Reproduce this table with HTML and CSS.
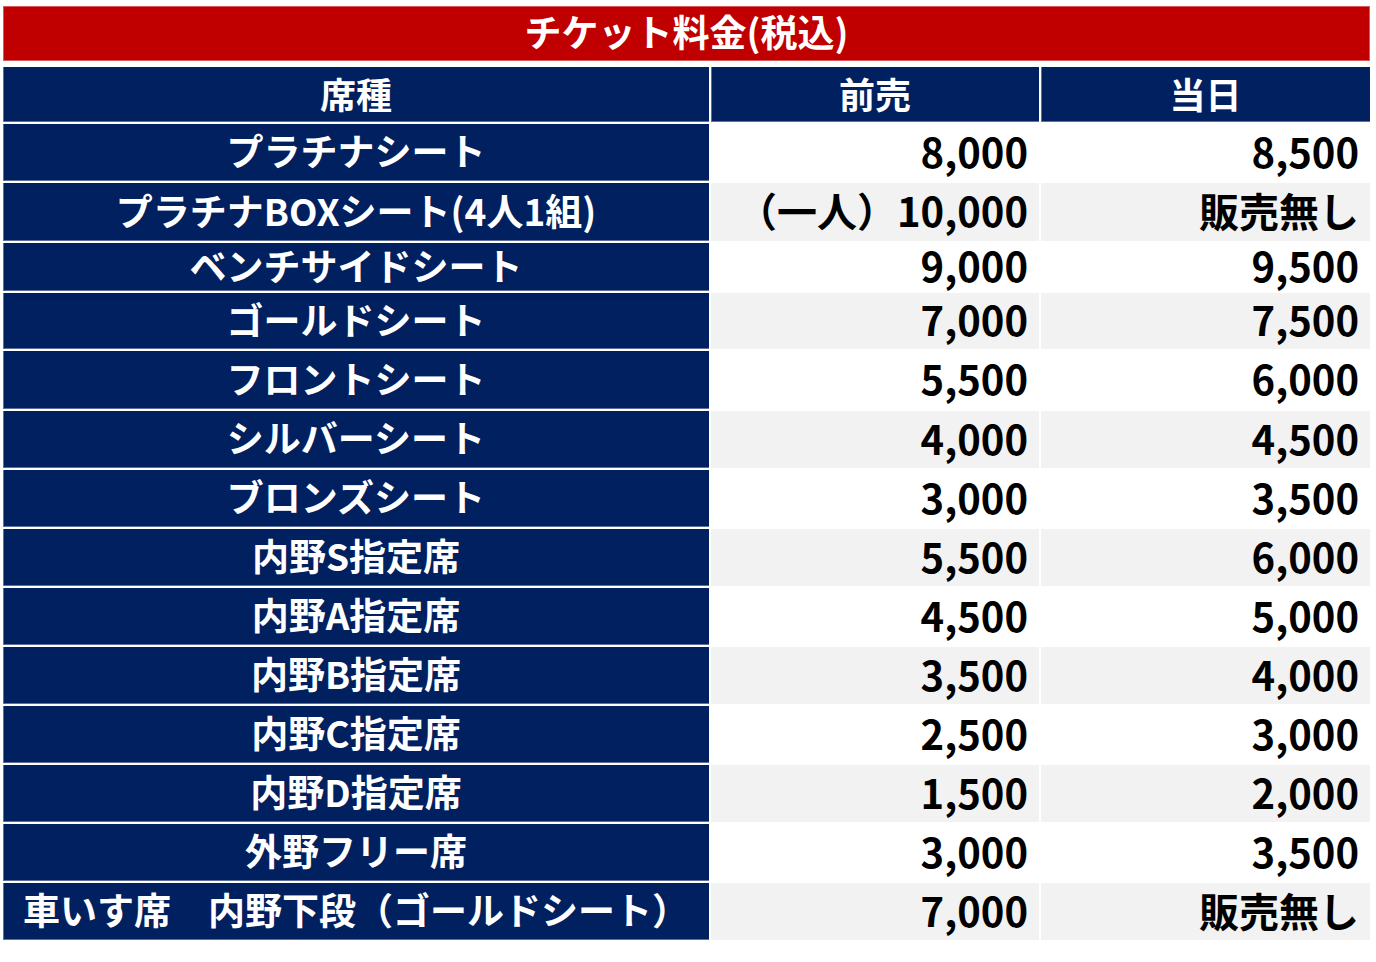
FILE: index.html
```html
<!DOCTYPE html>
<html lang="ja">
<head>
<meta charset="utf-8">
<title>チケット料金(税込)</title>
<link rel="stylesheet" href="styles.css">
</head>
<body>
<div class="sheet">
  <div class="title">チケット料金(税込)</div>
  <div class="grid">
    <div class="hd">席種</div><div class="hd">前売</div><div class="hd">当日</div>

    <div class="seat">プラチナシート</div><div class="num">8,000</div><div class="num">8,500</div>
    <div class="seat">プラチナBOXシート(4人1組)</div><div class="num alt">（一人）10,000</div><div class="num alt">販売無し</div>
    <div class="seat">ベンチサイドシート</div><div class="num">9,000</div><div class="num">9,500</div>
    <div class="seat">ゴールドシート</div><div class="num alt">7,000</div><div class="num alt">7,500</div>
    <div class="seat">フロントシート</div><div class="num">5,500</div><div class="num">6,000</div>
    <div class="seat">シルバーシート</div><div class="num alt">4,000</div><div class="num alt">4,500</div>
    <div class="seat">ブロンズシート</div><div class="num">3,000</div><div class="num">3,500</div>
    <div class="seat">内野S指定席</div><div class="num alt">5,500</div><div class="num alt">6,000</div>
    <div class="seat">内野A指定席</div><div class="num">4,500</div><div class="num">5,000</div>
    <div class="seat">内野B指定席</div><div class="num alt">3,500</div><div class="num alt">4,000</div>
    <div class="seat">内野C指定席</div><div class="num">2,500</div><div class="num">3,000</div>
    <div class="seat">内野D指定席</div><div class="num alt">1,500</div><div class="num alt">2,000</div>
    <div class="seat">外野フリー席</div><div class="num">3,000</div><div class="num">3,500</div>
    <div class="seat">車いす席　内野下段（ゴールドシート）</div><div class="num alt">7,000</div><div class="num alt">販売無し</div>
  </div>
</div>
</body>
</html>
```
FILE: styles.css
```css
html, body {
  margin: 0;
  padding: 0;
  background: #ffffff;
}
body {
  font-family: "Noto Sans CJK JP", "Noto Sans", sans-serif;
  font-weight: 700;
}
.sheet {
  padding: 6px 0 0 3px;
  width: 1367px;
}
.title {
  height: 55px;
  box-sizing: border-box;
  padding-bottom: 5px;
  background: #c00000;
  box-shadow: inset 0 0 0 1px #d85a5a;
  color: #ffffff;
  font-size: 37px;
  line-height: 1;
  display: flex;
  align-items: center;
  justify-content: center;
  margin-bottom: 6px;
}
.grid {
  display: grid;
  grid-template-columns: 706px 328px 329px;
  grid-template-rows: 55px 57px 58px 48px 56px 58px 57px 57px 57px 57px 57px 57px 57px 57px 57px;
  gap: 2px;
}
.hd, .seat {
  background: #002060;
  color: #ffffff;
  display: flex;
  align-items: center;
  justify-content: center;
  font-size: 37px;
  line-height: 1;
  padding-bottom: 4px;
  box-sizing: border-box;
  white-space: nowrap;
  box-shadow: inset 1px 0 0 #5d6f9c, inset 0 -1px 0 #5d6f9c;
}
.hd {
  font-size: 36px;
}
.num {
  background: #ffffff;
  color: #000000;
  display: flex;
  align-items: center;
  justify-content: flex-end;
  padding-right: 11px;
  padding-bottom: 4px;
  box-sizing: border-box;
  font-size: 40px;
  font-weight: 700;
  line-height: 1;
  white-space: nowrap;
}
.num.alt {
  background: #f2f2f2;
}
```
